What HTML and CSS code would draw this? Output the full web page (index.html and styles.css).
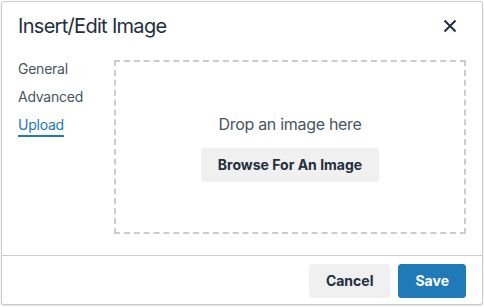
FILE: index.html
```html
<!DOCTYPE html>
<html lang="en">
  <head>
    <meta charset="UTF-8" />
    <title>Insert/Edit Image</title>
    <link rel="stylesheet" href="styles.css">
  </head>
  <body>
    <div class="dialog" role="dialog" aria-label="Insert/Edit Image">
      <div class="dialog-header">
        <h1 class="dialog-title">Insert/Edit Image</h1>
        <button class="close" type="button" aria-label="Close">
          <svg viewBox="0 0 24 24" width="24" height="24" aria-hidden="true">
            <path d="M6.5 6.5l11 11M17.5 6.5l-11 11"></path>
          </svg>
        </button>
      </div>

      <div class="dialog-body">
        <div class="tabs" role="tablist">
          <div class="tab" role="tab">General</div>
          <div class="tab" role="tab">Advanced</div>
          <div class="tab active" role="tab">Upload</div>
        </div>
        <div class="panel">
          <div class="dropzone">
            <p class="drop-text">Drop an image here</p>
            <button class="btn btn-secondary" type="button">Browse For An Image</button>
          </div>
        </div>
      </div>

      <div class="dialog-footer">
        <button class="btn btn-secondary" type="button">Cancel</button>
        <button class="btn btn-primary" type="button">Save</button>
      </div>
    </div>
  </body>
</html>
```

FILE: styles.css
```css
:root {
  --clr-text: #222f3e;
  --clr-muted: #4a5562;
  --clr-border: #cccccc;
  --clr-primary: #207ab7;
  --clr-btn: #f0f0f0;
  --font-family: Inter, "Liberation Sans", sans-serif;
}

* {
  box-sizing: border-box;
}

body {
  margin: 0;
  background: #fff;
  font-family: var(--font-family);
  color: var(--clr-text);
}

.dialog {
  margin: 1px;
  width: 482px;
  height: 304px;
  border: 1px solid var(--clr-border);
  border-radius: 3px;
  box-shadow: 0 1px 2px rgb(0 0 0 / 0.15);
  display: flex;
  flex-direction: column;
  background: #fff;
}

.dialog-header {
  display: flex;
  align-items: center;
  justify-content: space-between;
  height: 44px;
  padding: 4px 16px 0 16px;
}

.dialog-title {
  margin: 0;
  font-size: 20px;
  font-weight: 400;
  line-height: 1.3;
  letter-spacing: -0.7px;
}

.close {
  border: 0;
  background: none;
  padding: 0;
  width: 24px;
  height: 24px;
  margin-right: 4px;
  cursor: pointer;
}

.close svg {
  display: block;
  fill: none;
  stroke: var(--clr-text);
  stroke-width: 2;
}

.dialog-body {
  flex: 1;
  display: flex;
  padding: 14px 16px 21px 16px;
}

.tabs {
  width: 96px;
  display: flex;
  flex-direction: column;
  gap: 6px;
  margin-top: -1px;
}

.tab {
  align-self: flex-start;
  font-size: 14px;
  line-height: 20px;
  letter-spacing: -0.25px;
  color: var(--clr-muted);
  border-bottom: 2px solid transparent;
}

.tab.active {
  color: var(--clr-primary);
  border-bottom-color: var(--clr-primary);
}

.panel {
  flex: 1;
  display: flex;
}

.dropzone {
  flex: 1;
  border: 2px dashed var(--clr-border);
  display: flex;
  flex-direction: column;
  align-items: center;
  justify-content: center;
  gap: 12px;
}

.drop-text {
  margin: 0;
  font-size: 16px;
  line-height: 24px;
  letter-spacing: -0.3px;
  color: var(--clr-muted);
}

.btn {
  border: 1px solid transparent;
  border-radius: 3px;
  font-family: var(--font-family);
  font-size: 14px;
  font-weight: 700;
  line-height: 24px;
  padding: 4px 16px;
  cursor: pointer;
}

.btn-secondary {
  background: var(--clr-btn);
  border-color: var(--clr-btn);
  color: var(--clr-text);
}

.btn-primary {
  background: var(--clr-primary);
  border-color: var(--clr-primary);
  color: #fff;
}

.dialog-footer {
  display: flex;
  justify-content: flex-end;
  gap: 8px;
  padding: 8px 16px 6px;
  border-top: 1px solid var(--clr-border);
}

.dialog-footer .btn-secondary {
  padding: 4px 16px;
  min-width: 80px;
}

.dialog-footer .btn-primary {
  min-width: 66px;
}
```
